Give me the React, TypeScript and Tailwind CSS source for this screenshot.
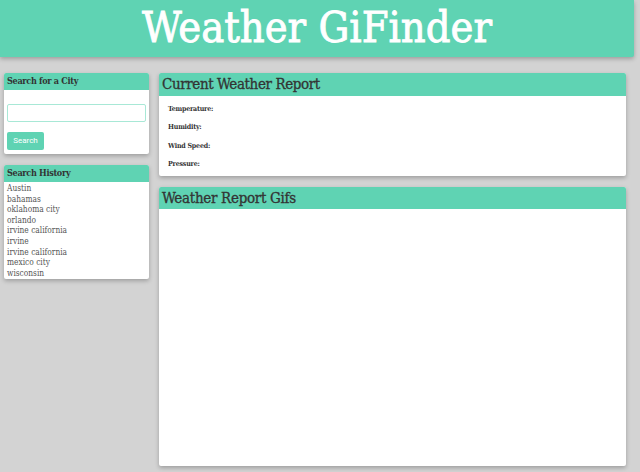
import React from "react";

const slab = { fontFamily: '"DejaVu Serif Condensed", "DejaVu Serif", "Liberation Serif", serif' };

function Card({ title, titleClass, headerClass, children, className }: { title: string; titleClass: string; headerClass: string; children?: React.ReactNode; className?: string }) {
  return (
    <div className={`bg-white rounded-[2px] shadow-[0_2px_4px_rgba(0,0,0,0.25)] flex flex-col ${className ?? ""}`}>
      <div className={`bg-[#5fd3b3] rounded-t-[2px] flex items-center px-[3px] ${headerClass}`}>
        <span className={`text-[#333] font-stretch-condensed whitespace-nowrap ${titleClass}`} style={slab}>{title}</span>
      </div>
      {children}
    </div>
  );
}

export default function App() {
  const history = ["Austin", "bahamas", "oklahoma city", "orlando", "irvine california", "irvine", "irvine california", "mexico city", "wisconsin"];
  return (
    <div className="w-[640px] h-[472px] bg-[#d3d3d3] overflow-hidden" style={slab}>
      <div className="w-[634px] h-[57px] bg-[#5fd3b3] shadow-[0_2px_4px_rgba(0,0,0,0.25)] rounded-br-[2px] flex items-center justify-center">
        <h1 className="text-white text-[43px] leading-none font-stretch-condensed pb-[2px] [-webkit-text-stroke:0.8px_white]" style={slab}>Weather GiFinder</h1>
      </div>
      <div className="flex pt-[16px]">
        <div className="w-[145px] ml-[4px] flex flex-col gap-[11px]">
          <Card title="Search for a City" titleClass="text-[9px] font-bold tracking-[-0.3px]" headerClass="h-[17px]">
            <div className="px-[3px] pt-[14px] pb-[4px] flex flex-col">
              <div className="h-[18px] border border-[#a8e8d6] rounded-[2px]" />
              <div className="mt-[10px] w-[37px] h-[18px] bg-[#5fd3b3] rounded-[2px] flex items-center justify-center text-white text-[8px]" style={{ fontFamily: "Roboto, sans-serif" }}>Search</div>
            </div>
          </Card>
          <Card title="Search History" titleClass="text-[9px] font-bold tracking-[-0.3px]" headerClass="h-[17px]">
            <ul className="px-[3px] pt-[1px] pb-[1px]">
              {history.map((h, i) => (
                <li key={i} className="text-[8.3px] leading-[10.6px] text-[#555] font-stretch-condensed">{h}</li>
              ))}
            </ul>
          </Card>
        </div>
        <div className="w-[467px] ml-[10px] flex flex-col gap-[11px]">
          <Card title="Current Weather Report" titleClass="text-[15px] tracking-[-0.4px] [-webkit-text-stroke:0.3px_#333]" headerClass="h-[23px]" className="h-[103px]">
            <div className="pl-[9px] pt-[8px] flex flex-col gap-[8.4px]">
              {["Temperature:", "Humidity:", "Wind Speed:", "Pressure:"].map((t) => (
                <div key={t} className="text-[7px] leading-[10px] font-bold tracking-[-0.2px] text-[#333] font-stretch-condensed">{t}</div>
              ))}
            </div>
          </Card>
          <Card title="Weather Report Gifs" titleClass="text-[15px] tracking-[-0.3px] [-webkit-text-stroke:0.3px_#333]" headerClass="h-[22px]" className="h-[279px]" />
        </div>
      </div>
    </div>
  );
}
